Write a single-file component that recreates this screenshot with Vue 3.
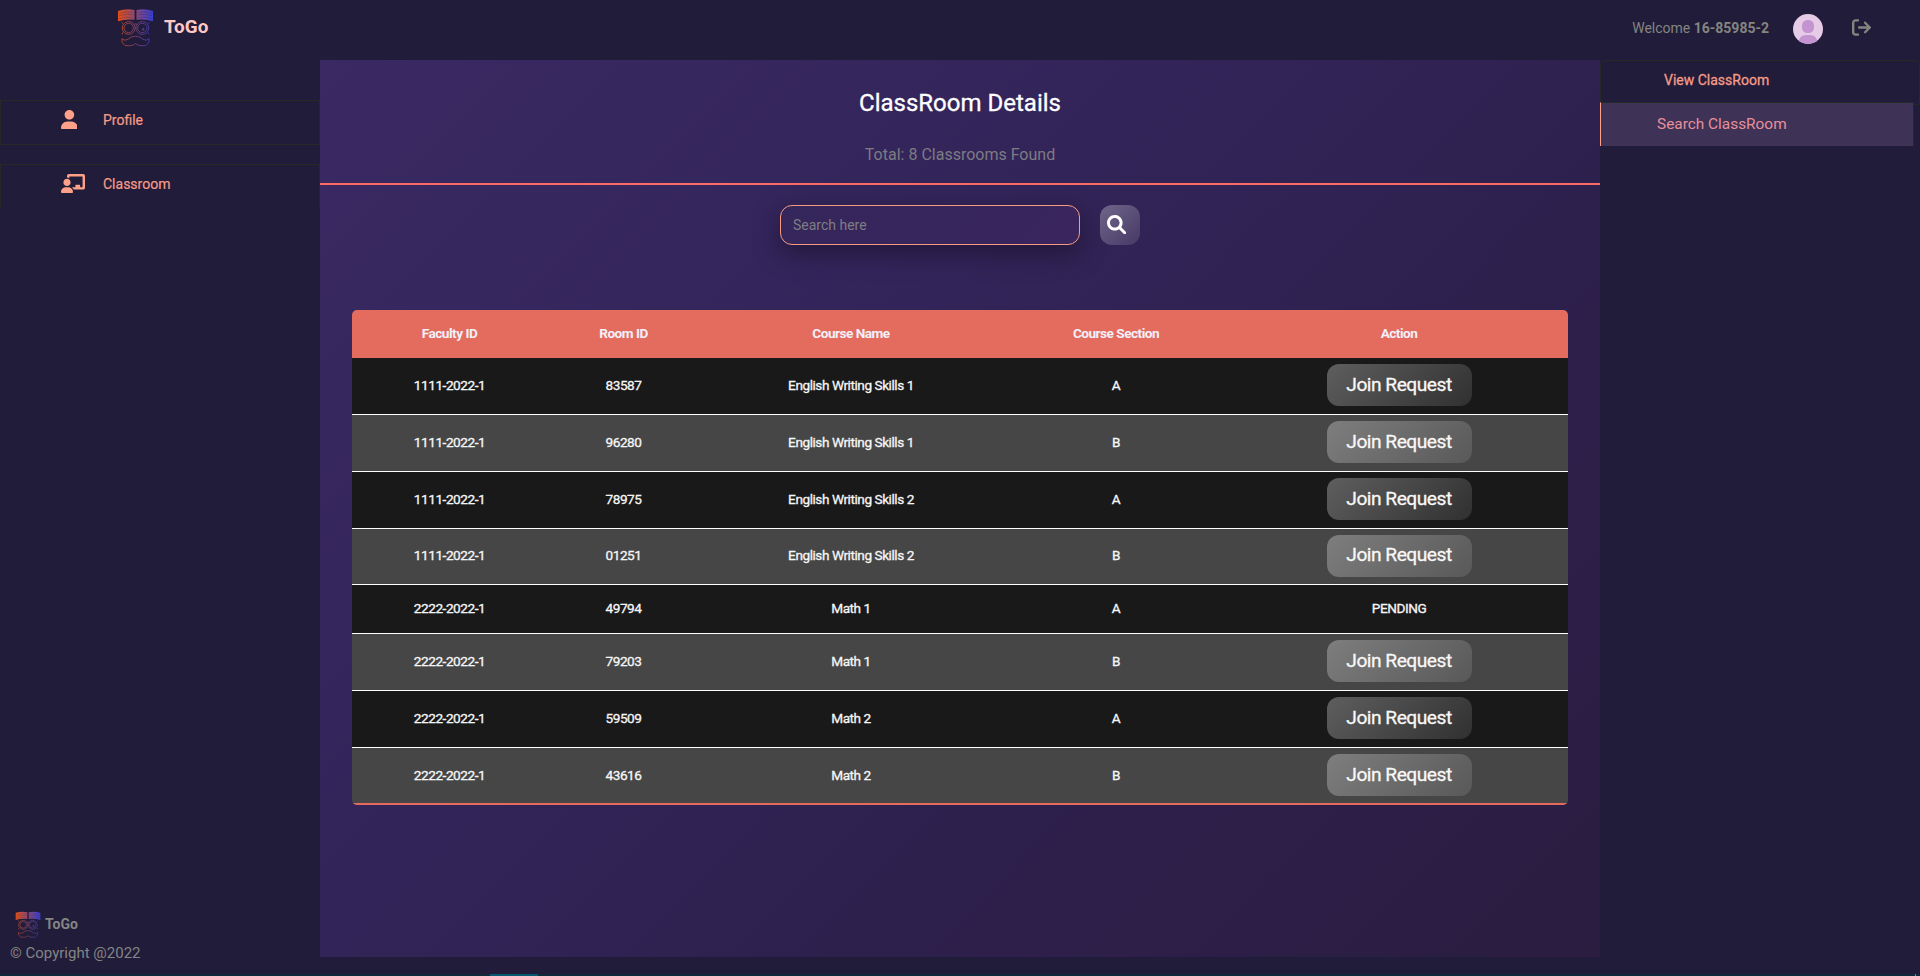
<script setup>
const rows = [
  ['1111-2022-1', '83587', 'English Writing Skills 1', 'A', 57],
  ['1111-2022-1', '96280', 'English Writing Skills 1', 'B', 57],
  ['1111-2022-1', '78975', 'English Writing Skills 2', 'A', 57],
  ['1111-2022-1', '01251', 'English Writing Skills 2', 'B', 56],
  ['2222-2022-1', '49794', 'Math 1', 'A', 49, 'PENDING'],
  ['2222-2022-1', '79203', 'Math 1', 'B', 57],
  ['2222-2022-1', '59509', 'Math 2', 'A', 57],
  ['2222-2022-1', '43616', 'Math 2', 'B', 57],
].map(([faculty, room, course, section, height, status]) => ({ faculty, room, course, section, height, status }))
</script>

<template>
  <div class="page">
    <svg class="defs" width="0" height="0">
      <linearGradient id="brand" x1="0" y1="0" x2="38" y2="0" gradientUnits="userSpaceOnUse">
        <stop offset="0.05" stop-color="#e2501c" />
        <stop offset="0.5" stop-color="#8f4a78" />
        <stop offset="0.95" stop-color="#3a3fd0" />
      </linearGradient>
      <symbol id="logo" viewBox="0 0 38 40">
        <path d="M1 3Q10 0 18 2V12Q9 11 1 13.500ZM20 2Q28 0 37 3V13.500Q29 11 20 12Z" fill="url(#brand)" />
        <path d="M2 5.500Q10 3 17 4.500M2 8Q10 5.500 17 7M2 11Q10 8 17 10M21 4.500Q29 3 36 5.500M21 7Q29 5.500 36 8M21 10Q29 8 36 11" fill="none" stroke="#201c3a" stroke-opacity=".4" stroke-width=".7" />
        <g fill="none" stroke="url(#brand)" stroke-width=".9" stroke-opacity=".85">
          <circle cx="12" cy="20.500" r="6.600" /><circle cx="12" cy="20.500" r="4.800" />
          <circle cx="26" cy="20.500" r="6.600" /><circle cx="26" cy="20.500" r="4.800" />
          <path d="M17 17Q19 15.500 21 17M6 16Q4.500 15 5 14.500M32 16Q33.500 15 33 14.500M6 25Q4.500 27 6 27M32 25Q33.500 27 32 27M25.500 22L27.500 20.500V23Z" />
          <path d="M5 31.500Q8 34.500 11.500 32Q14 29 19 29Q24 29 26.500 32Q30 34.500 33 31.500Q34 36 29.500 38.500Q22 39.500 19 36.500Q16 39.500 8.500 38.500Q4 36 5 31.500Z" />
        </g>
      </symbol>
    </svg>

    <header class="topbar">
      <div class="brand">
        <svg class="brand-logo"><use href="#logo" /></svg>
        <span>ToGo</span>
      </div>
      <div class="account">
        <span class="welcome">Welcome <b>16-85985-2</b></span>
        <svg class="avatar" viewBox="0 0 30 30">
          <defs><clipPath id="round"><circle cx="15" cy="15" r="15" /></clipPath></defs>
          <g clip-path="url(#round)">
            <rect width="30" height="30" fill="#e6cbe7" />
            <rect x="9" y="6" width="12" height="13" rx="5.500" fill="#c494d0" />
            <path d="M5 30Q6 21 13 21H17Q24 21 25 30Z" fill="#c494d0" />
          </g>
        </svg>
        <svg class="logout" viewBox="0 0 512 512">
          <path d="M160 416H96c-17.670 0-32-14.330-32-32V128c0-17.670 14.330-32 32-32h64c17.670 0 32-14.330 32-32S177.700 32 160 32H96C42.980 32 0 74.980 0 128v256c0 53.020 42.980 96 96 96h64c17.670 0 32-14.330 32-32S177.700 416 160 416zM502.600 233.400l-128-128c-12.510-12.510-32.760-12.490-45.250 0c-12.500 12.500-12.500 32.750 0 45.250L402.800 224H192C174.300 224 160 238.300 160 256s14.310 32 32 32h210.800l-73.380 73.380c-12.500 12.500-12.500 32.750 0 45.250s32.750 12.500 45.250 0l128-128C515.100 266.100 515.100 245.900 502.600 233.400z" />
        </svg>
      </div>
    </header>

    <aside class="sidebar">
      <nav>
        <a class="item">
          <span class="icon"><svg width="16.800" height="19.200" viewBox="0 0 448 512"><path d="M224 256c70.700 0 128-57.310 128-128s-57.300-128-128-128C153.300 0 96 57.310 96 128S153.300 256 224 256zM274.700 304H173.300C77.610 304 0 381.600 0 477.300c0 19.140 15.520 34.670 34.660 34.670h378.700C432.500 512 448 496.500 448 477.300C448 381.600 370.400 304 274.700 304z" /></svg></span>
          Profile
        </a>
        <a class="item last">
          <span class="icon"><svg width="24" height="19.200" viewBox="0 0 640 512"><path d="M592 0h-384C181.500 0 160 22.250 160 49.630V96c23.420 0 45.100 6.781 63.100 17.810V64h352v288h-64V304c0-8.838-7.164-16-16-16h-96c-8.836 0-16 7.162-16 16V352H287.300c22.070 16.480 39.540 38.500 50.760 64h253.900C618.500 416 640 393.800 640 366.400V49.630C640 22.250 618.500 0 592 0zM160 320c53.020 0 96-42.980 96-96c0-53.020-42.980-96-96-96C106.100 128 64 170.100 64 224C64 277 106.100 320 160 320zM192 352H128c-70.690 0-128 57.310-128 128c0 17.670 14.330 32 32 32h256c17.670 0 32-14.330 32-32C320 409.300 262.700 352 192 352z" /></svg></span>
          Classroom
        </a>
      </nav>
      <footer>
        <div class="foot-brand"><svg class="foot-logo"><use href="#logo" /></svg><b>ToGo</b></div>
        <div class="copyright">© Copyright @2022</div>
      </footer>
    </aside>

    <main class="content">
      <div class="heading">
        <h1>ClassRoom Details</h1>
        <p>Total: 8 Classrooms Found</p>
      </div>
      <div class="search">
        <input type="text" placeholder="Search here" />
        <button class="search-btn" aria-label="Search">
          <svg width="19.200" height="19.200" viewBox="0 0 512 512"><path d="M500.300 443.700l-119.700-119.700c27.220-40.410 40.650-90.900 33.460-144.700C401.800 87.790 326.800 13.320 235.200 1.723C99.010-15.510-15.510 99.010 1.724 235.200c11.600 91.640 86.080 166.700 177.600 178.900c53.800 7.189 104.300-6.236 144.700-33.460l119.700 119.700c15.620 15.620 40.950 15.620 56.570 0C515.900 484.700 515.900 459.300 500.300 443.700zM79.100 208c0-70.580 57.420-128 128-128s128 57.420 128 128c0 70.580-57.420 128-128 128S79.100 278.600 79.100 208z" /></svg>
        </button>
      </div>
      <div class="table">
        <div class="row head">
          <span>Faculty ID</span><span>Room ID</span><span>Course Name</span><span>Course Section</span><span>Action</span>
        </div>
        <div v-for="row in rows" :key="row.room" class="row" :style="{ height: row.height + 'px' }">
          <span>{{ row.faculty }}</span>
          <span>{{ row.room }}</span>
          <span>{{ row.course }}</span>
          <span>{{ row.section }}</span>
          <span><template v-if="row.status">{{ row.status }}</template><button v-else class="join">Join Request</button></span>
        </div>
      </div>
    </main>

    <aside class="subnav">
      <a class="view">View ClassRoom</a>
      <a class="find">Search ClassRoom</a>
    </aside>

    <div class="strip"><i class="strip-mark"></i><i class="strip-end"></i></div>
  </div>
</template>

<style>
body { background: #201c3a; }
</style>

<style scoped>
* { box-sizing: border-box; }
.page {
  width: 1920px;
  height: 976px;
  overflow: hidden;
  display: grid;
  grid-template-columns: 320px 1280px 320px;
  grid-template-rows: 60px 897px 17px 2px;
  background: #201c3a;
  font-family: Roboto, "Liberation Sans", sans-serif;
  font-size: 14px;
  color: #fff;
}
.defs { position: absolute; }
.topbar {
  grid-area: 1 / 1 / 2 / 4;
  display: flex;
  justify-content: space-between;
  padding: 0 49px 0 117px;
}
.brand { display: flex; color: #ffc8c4; font-size: 18.900px; font-weight: 700; line-height: 54px; }
.brand-logo { width: 37px; height: 39px; margin: 8px 10px 0 0; }
.account { display: flex; color: #85857f; }
.welcome { line-height: 56px; margin-right: 24px; }
.avatar { width: 30px; height: 30px; margin: 14px 29px 0 0; }
.logout { width: 19px; height: 19px; margin-top: 18px; fill: #85857f; }

.sidebar {
  grid-area: 2 / 1 / 4 / 2;
  display: flex;
  flex-direction: column;
  justify-content: space-between;
  padding-top: 40px;
}
.item {
  display: flex;
  height: 45px;
  margin-bottom: 19px;
  padding-left: 59px;
  border: 1px solid #272927;
  color: #f69b88;
  line-height: 38px;
  -webkit-text-stroke: .2px;
}
.item.last { border-bottom: 0; height: 44px; }
.icon { width: 43px; padding: 9px 0 0 .5px; line-height: 0; }
.icon svg { fill: #ffa088; }
footer { color: #858583; padding: 0 10px 10px; }
.foot-brand { display: flex; height: 31px; font-size: 14px; line-height: 26px; }
.foot-logo { width: 26px; height: 29px; margin: -1px 4px 0 5px; }
.copyright { font-size: 15px; line-height: 22px; }

.content {
  grid-area: 2 / 2 / 3 / 3;
  background: linear-gradient(135deg, #3a2963 0%, #33255a 35%, #2e204d 65%, #2a1d40 100%);
}
.heading { height: 125px; border-bottom: 2px solid #fb6b66; text-align: center; padding-top: 29px; }
h1 { margin: 0; font-size: 24px; font-weight: 400; line-height: 28px; -webkit-text-stroke: .3px; }
p { margin: 28px 0 0; font-size: 16px; line-height: 19px; color: #7e7b82; }
.search { display: flex; gap: 20px; justify-content: center; padding-top: 20px; }
input {
  width: 300px;
  height: 40px;
  padding: 0 12px;
  border: 1px solid #f69a82;
  border-radius: 12px;
  outline: 0;
  background: linear-gradient(135deg, #34265b, #3b255f);
  box-shadow: 0 8px 24px rgba(20, 12, 35, .55);
  color: #fff;
  font: 14px Roboto, sans-serif;
}
input::placeholder { color: #807d84; opacity: 1; }
.search-btn {
  width: 40px;
  height: 40px;
  padding: 0 0 1px 7px;
  border: 0;
  border-radius: 12px;
  background: linear-gradient(135deg, rgba(255, 255, 255, .3), rgba(255, 255, 255, .1));
  text-align: left;
  line-height: 0;
}
.search-btn svg { fill: #fff; }
.table {
  width: 1216px;
  margin: 65px auto 0;
  border-radius: 5px;
  overflow: hidden;
}
.row {
  display: grid;
  grid-template-columns: 195px 153px 302px 228px 338px;
  align-items: center;
  padding-bottom: 3px;
  border-bottom: 1px solid #fff;
  background: #191919;
  color: #f6f6f6;
  font-size: 13.600px;
  font-weight: 400;
  letter-spacing: -.44px;
  text-align: center;
  -webkit-text-stroke: .3px;
}
.row:nth-child(odd) { background: #464646; }
.row.head {
  height: 48px;
  border: 0;
  background: #e46c5e;
  color: #f3f0fa;
  font-weight: 700;
  letter-spacing: -.5px;
  padding-bottom: 2px;
  -webkit-text-stroke: 0;
}
.row:last-child { border-bottom: 2px solid #e46c5e; padding-bottom: 2px; }
.join {
  display: block;
  width: 145px;
  height: 42px;
  margin: 1px auto 0;
  padding: 0 0 2px;
  border: 0;
  border-radius: 12px;
  background: linear-gradient(135deg, rgba(255, 255, 255, .3), rgba(255, 255, 255, .1));
  color: #f8f8f8;
  font: 400 19.200px Roboto, sans-serif;
  letter-spacing: -.5px;
}

.subnav { grid-area: 2 / 3 / 4 / 4; color: #f69b88; }
.view {
  display: block;
  height: 45px;
  padding-left: 63px;
  border: 1px solid #272927;
  border-radius: 5px 5px 0 0;
  line-height: 38px;
  -webkit-text-stroke: .3px;
}
.find {
  position: relative;
  display: block;
  width: 314px;
  height: 44px;
  margin-top: -3px;
  padding-left: 56px;
  border: 1px solid #272927;
  border-left-color: #ffa088;
  border-bottom: 0;
  background: #3e3257;
  color: #e88f9c;
  font-size: 15.400px;
  line-height: 42px;
}
.strip { grid-area: 4 / 1 / 5 / 4; display: flex; background: #102a3b; }
.strip-mark { width: 48px; margin-left: 490px; background: #05586f; }
.strip-end { width: 1px; margin-left: 1377px; background: #7d8a96; }
</style>
